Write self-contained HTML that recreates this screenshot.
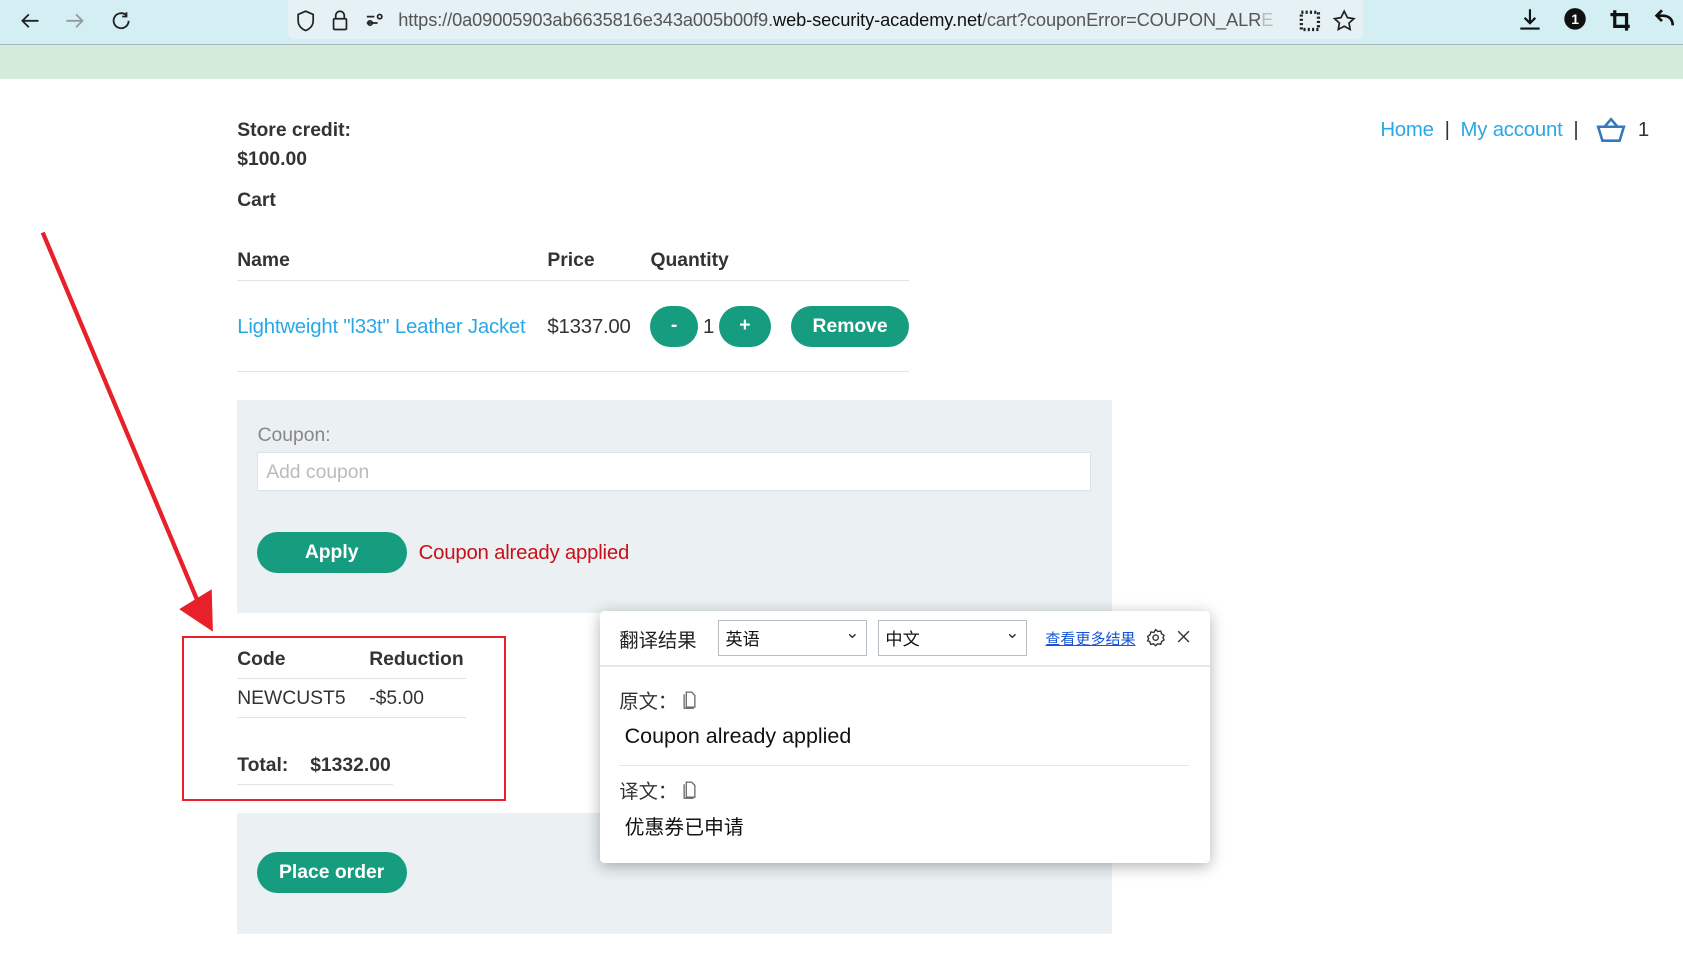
<!DOCTYPE html>
<html><head><meta charset="utf-8"><style>
html,body{margin:0;padding:0;width:1683px;height:956px;overflow:hidden;background:#fff}
#w{zoom:1.07334;position:relative;width:1568px;height:891px;font-family:"Liberation Sans",Arial,sans-serif;color:#333}
.a{position:absolute;white-space:nowrap}
.b{font-weight:bold;font-size:18px;color:#333}
.btn{position:absolute;background:#169c7f;color:#fff;font-weight:bold;font-size:18px;border-radius:20px;text-align:center;line-height:38px;height:38px}
.lnk{color:#29a8e6}
.cj{font-family:"Liberation Sans","Noto Sans CJK SC",sans-serif}
</style></head><body><div id="w">
<div class="a" style="left:0;top:0;width:1568px;height:41px;background:#d3eff4;border-bottom:1px solid #a6b8bd"></div>
<div class="a" style="left:268px;top:0;width:1002px;height:36px;background:#e6f1f5;border-radius:0 0 6px 6px"></div>
<svg class="a" style="left:16px;top:8px" width="110" height="22" viewBox="0 0 110 22" fill="none" stroke="#222" stroke-width="1.7">
<path d="M20 11H5M11 5L5 11l6 6"/><path d="M46 11h15M55 5l6 6-6 6" stroke="#999"/><path d="M102 6a7 7 0 1 0 2 5M102 3v4h-4"/></svg>
<svg class="a" style="left:276px;top:7px" width="90" height="24" viewBox="0 0 90 24" fill="none" stroke="#222" stroke-width="1.6">
<path d="M9 3l7 3v6c0 5-4 8-7 9-3-1-7-4-7-9V6z"/><rect x="35" y="10" width="12" height="10" rx="1"/><path d="M37 10V7a4 4 0 0 1 8 0v3"/><path d="M66 8h7M66 14h10"/><circle cx="78" cy="8" r="2"/><circle cx="69" cy="14" r="2"/></svg>
<div class="a" style="left:371px;top:8px;font-size:17px;color:#555;letter-spacing:-0.1px">https://0a09005903ab6635816e343a005b00f9.<span style="color:#111">web-security-academy.net</span>/cart?couponError=COUPON_ALR<span style="color:#bbb">E</span></div>
<svg class="a" style="left:1208px;top:7px" width="60" height="24" viewBox="0 0 60 24" fill="none" stroke="#222" stroke-width="1.6">
<rect x="4" y="4" width="16" height="16" stroke-dasharray="2 2" stroke-width="3"/><path d="M44 3l3 6 6 1-4.5 4 1 6-5.5-3-5.5 3 1-6L35 10l6-1z"/></svg>
<svg class="a" style="left:1412px;top:6px" width="152" height="26" viewBox="0 0 152 26" fill="none" stroke="#111" stroke-width="2">
<path d="M13 3v13M8 11l5 5 5-5M4 21h18"/><circle cx="55" cy="12" r="9" fill="#111"/><text x="51.5" y="17" fill="#fff" stroke="none" font-size="13" font-weight="bold" font-family="Liberation Sans">1</text>
<path d="M92 4v15h14M88 8h15v15" stroke-width="3"/><path d="M146 18c0-6-4-9-10-9h-4M136 4l-5 5 5 5" stroke-width="2.5"/></svg>
<div class="a" style="left:0;top:42px;width:1568px;height:32px;background:#d4ebd9"></div>

<div class="a b" style="left:221px;top:112px">Store credit:</div>
<div class="a b" style="left:221px;top:139px">$100.00</div>
<div class="a b" style="left:221px;top:177px">Cart</div>
<div class="a" style="left:1286px;top:111px;font-size:19px;letter-spacing:-0.2px"><span class="lnk">Home</span> <span style="margin:0 5px;color:#333">|</span> <span class="lnk">My account</span> <span style="margin:0 5px;color:#333">|</span></div>
<svg class="a" style="left:1487px;top:108px" width="28" height="26" viewBox="0 0 28 26" fill="none" stroke="#3479bd" stroke-width="2.4"><path d="M2 10h24l-4 13H6z"/><path d="M8 10l6-7 6 7"/></svg>
<div class="a" style="left:1526px;top:111px;font-size:19px;color:#333">1</div>

<div class="a b" style="left:221px;top:233px">Name</div>
<div class="a b" style="left:510px;top:233px">Price</div>
<div class="a b" style="left:606px;top:233px">Quantity</div>
<div class="a" style="left:221px;top:261px;width:626px;height:1px;background:#e3e3e3"></div>
<div class="a lnk" style="left:221px;top:294px;font-size:19px;letter-spacing:-0.2px">Lightweight "l33t" Leather Jacket</div>
<div class="a" style="left:510px;top:294px;font-size:19px;color:#333;letter-spacing:-0.2px">$1337.00</div>
<div class="btn" style="left:606px;top:285px;width:44px;border-radius:19px">-</div>
<div class="a" style="left:655px;top:294px;font-size:19px">1</div>
<div class="btn" style="left:670px;top:285px;width:48px">+</div>
<div class="btn" style="left:737px;top:285px;width:110px;line-height:39px">Remove</div>

<div class="a" style="left:221px;top:346px;width:626px;height:1px;background:#e3e3e3"></div>

<div class="a" style="left:221px;top:373px;width:815px;height:198px;background:#ebf0f2"></div>
<div class="a" style="left:240px;top:396px;font-size:18px;color:#888">Coupon:</div>
<div class="a" style="left:239px;top:421px;width:776px;height:35px;background:#fff;border:1px solid #dde3e5"></div>
<div class="a" style="left:248px;top:430px;font-size:18px;color:#bbb">Add coupon</div>
<div class="btn" style="left:239px;top:496px;width:140px;line-height:39px">Apply</div>
<div class="a" style="left:390px;top:505px;font-size:19px;color:#c8101b;letter-spacing:-0.2px">Coupon already applied</div>

<div class="a b" style="left:221px;top:605px">Code</div>
<div class="a b" style="left:344px;top:605px">Reduction</div>
<div class="a" style="left:221px;top:632px;width:213px;height:1px;background:#e3e3e3"></div>
<div class="a" style="left:221px;top:641px;font-size:18px">NEWCUST5</div>
<div class="a" style="left:344px;top:641px;font-size:18px">-$5.00</div>
<div class="a" style="left:221px;top:668px;width:213px;height:1px;background:#e3e3e3"></div>
<div class="a b" style="left:221px;top:703px">Total:</div>
<div class="a b" style="left:289px;top:703px">$1332.00</div>
<div class="a" style="left:221px;top:730px;width:145px;height:1px;background:#e3e3e3"></div>
<div class="a" style="left:170px;top:593px;width:298px;height:150px;border:2px solid #e8202a"></div>

<div class="a" style="left:221px;top:757px;width:815px;height:113px;background:#ebf0f2"></div>
<div class="btn" style="left:239px;top:794px;width:140px;line-height:39px">Place order</div>

<svg class="a" style="left:30px;top:210px" width="180" height="380" viewBox="0 0 180 380"><path d="M10 7L155 352" stroke="#e8202a" stroke-width="4"/><path d="M140 358l27 18-1-34z" fill="#e8202a" stroke="#e8202a" stroke-width="3"/></svg>

<div class="a cj" style="left:559px;top:569px;width:568px;height:235px;background:#fff;border-radius:4px;box-shadow:0 3px 14px rgba(0,0,0,.3)">
<div class="a" style="left:18px;top:13px;font-size:18px;color:#222">翻译结果</div>
<div class="a" style="left:110px;top:9px;width:137px;height:31px;border:1px solid #b7bcc2;background:#fff"><span class="a" style="left:6px;top:3px;font-size:16px;color:#111">英语</span><span class="a" style="right:6px;top:1px;font-size:16px">&#x2304;</span></div>
<div class="a" style="left:259px;top:9px;width:137px;height:31px;border:1px solid #b7bcc2;background:#fff"><span class="a" style="left:6px;top:3px;font-size:16px;color:#111">中文</span><span class="a" style="right:6px;top:1px;font-size:16px">&#x2304;</span></div>
<div class="a" style="left:415px;top:16px;font-size:14px;color:#1554d9;text-decoration:underline">查看更多结果</div>
<svg class="a" style="left:509px;top:16px" width="44" height="18" viewBox="0 0 44 18" fill="none" stroke="#333" stroke-width="1.3"><circle cx="9" cy="9" r="2.5"/><path d="M9 1.5l2 1.8 2.7-.5.8 2.6 2.3 1.5-1 2.1 1 2.1-2.3 1.5-.8 2.6-2.7-.5-2 1.8-2-1.8-2.7.5-.8-2.6L1.5 12l1-2.1-1-2.1 2.3-1.5.8-2.6 2.7.5z"/><path d="M30 3l10 10M40 3L30 13"/></svg>
<div class="a" style="left:0;top:51px;width:568px;height:1px;background:#e8e8e8"></div>
<div class="a" style="left:18px;top:70px;font-size:18px;color:#333">原文：</div>
<svg class="a" style="left:76px;top:74px" width="14" height="18" viewBox="0 0 14 18" fill="none" stroke="#666" stroke-width="1.2"><path d="M4 2h5l3 3v11H4zM2 4v13h9"/></svg>
<div class="a" style="left:23px;top:106px;font-size:20px;color:#111">Coupon already applied</div>
<div class="a" style="left:18px;top:144px;width:531px;height:1px;background:#e8e8e8"></div>
<div class="a" style="left:18px;top:154px;font-size:18px;color:#333">译文：</div>
<svg class="a" style="left:76px;top:158px" width="14" height="18" viewBox="0 0 14 18" fill="none" stroke="#666" stroke-width="1.2"><path d="M4 2h5l3 3v11H4zM2 4v13h9"/></svg>
<div class="a" style="left:23px;top:187px;font-size:18.5px;color:#111">优惠券已申请</div>
</div>
</div></body></html>
